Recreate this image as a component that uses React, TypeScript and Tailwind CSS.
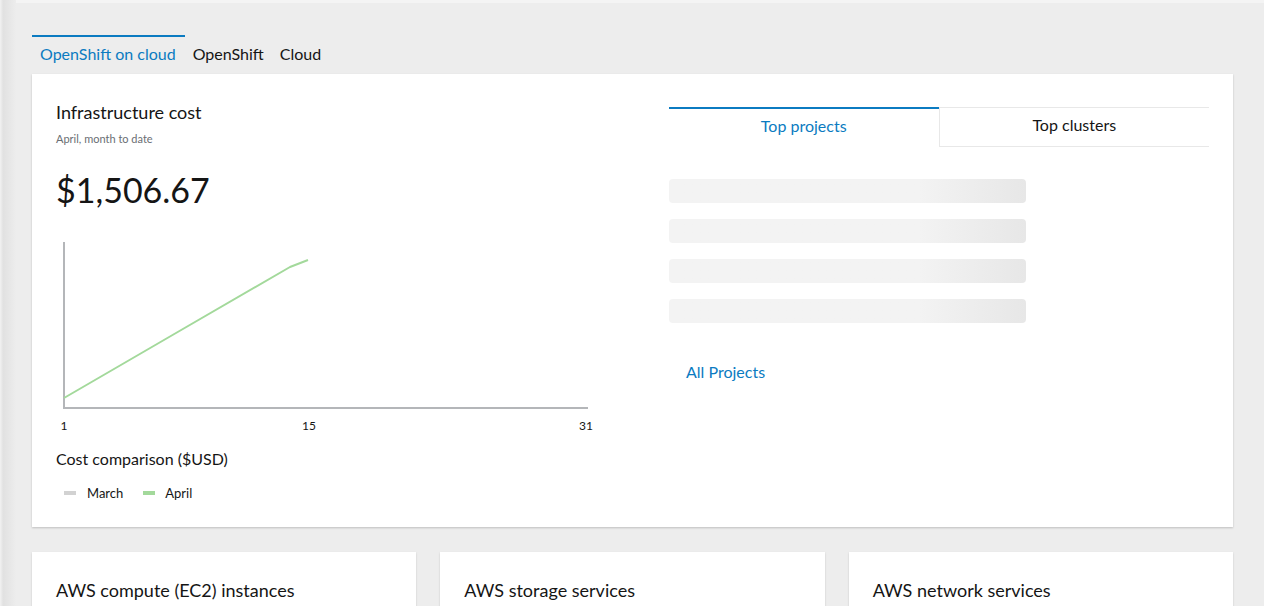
const font = { fontFamily: "Lato, 'Liberation Sans', sans-serif" }

function SkeletonBar() {
  return <div className="h-6 w-[357px] rounded-[4px] bg-gradient-to-r from-[#f3f3f3] from-70% to-[#e7e7e7]" />
}

function CostChart() {
  return (
    <svg width="560" height="198" viewBox="0 0 560 198" className="block">
      <line x1="8" y1="6" x2="8" y2="172" stroke="#b4b6b9" strokeWidth="2" />
      <line x1="7" y1="172" x2="532" y2="172" stroke="#b4b6b9" strokeWidth="2" />
      <polyline
        points="8,162 120,97 234,31 252,24"
        fill="none"
        stroke="#a3d99b"
        strokeWidth="2"
        strokeLinejoin="round"
      />
      <text x="8" y="194" fontSize="12" fill="#151515" textAnchor="middle" fontFamily="Lato, sans-serif">1</text>
      <text x="253" y="194" fontSize="12" fill="#151515" textAnchor="middle" fontFamily="Lato, sans-serif">15</text>
      <text x="530" y="194" fontSize="12" fill="#151515" textAnchor="middle" fontFamily="Lato, sans-serif">31</text>
    </svg>
  )
}

function ServiceCard({ title }: { title: string }) {
  return (
    <div className="flex-1 bg-white shadow-[0_1px_2px_rgba(0,0,0,0.15)] px-6 pt-[27px] pb-6">
      <h3 className="text-[18px] text-[#151515] leading-[22px]">{title}</h3>
    </div>
  )
}

export default function App() {
  const tabs = ["OpenShift on cloud", "OpenShift", "Cloud"]

  return (
    <div className="min-h-screen bg-[#ededed] flex" style={font}>
      <div className="w-[16px] shrink-0 bg-gradient-to-r from-[#f2f2f2] via-[#e1e1e1] via-20% to-[#ededed]" />
      <div className="flex-1 flex flex-col">
        <div className="h-[3px] bg-[#f4f4f4]" />
        <main className="pl-[16px] pr-[31px] pt-[32px]">
          <div className="flex">
            {tabs.map((t, i) => (
              <button
                key={t}
                className={`h-[39px] pb-1 text-[16px] border-t-2 ${
                  i === 0 ? "border-[#0b7bc1] text-[#0b7bc1] pl-2 pr-[9px]" : "border-transparent text-[#151515] px-2"
                }`}
              >
                {t}
              </button>
            ))}
          </div>

          <section className="bg-white shadow-[0_1px_2px_rgba(0,0,0,0.2)] flex justify-between pl-6 pr-6 pt-[27px] pb-[24px]">
            <div className="w-[589px]">
              <h2 className="text-[18px] leading-[22px] text-[#151515]">Infrastructure cost</h2>
              <p className="mt-[8px] text-[11px] text-[#6a6e73]">April, month to date</p>
              <p className="mt-[20px] text-[34px] leading-[44px] text-[#151515]">$1,506.67</p>
              <div className="mt-[24px]">
                <CostChart />
              </div>
              <p className="mt-[13px] text-[16px] text-[#151515]">Cost comparison ($USD)</p>
              <div className="mt-[13px] flex items-center pl-2 text-[13px] text-[#151515]">
                <span className="w-3 h-[4px] bg-[#d2d2d2] mr-[11px]" />
                <span>March</span>
                <span className="w-3 h-[4px] bg-[#a3d99b] ml-[20px] mr-[10px]" />
                <span>April</span>
              </div>
            </div>

            <div className="w-[540px] pt-[6px]">
              <div className="flex">
                <button className="flex-1 h-[40px] pb-1 border-t-2 border-[#0b7bc1] text-[16px] text-[#0b7bc1]">
                  Top projects
                </button>
                <button className="flex-1 h-[40px] pb-1 border border-r-0 border-[#e8e8e8] text-[16px] text-[#151515]">
                  Top clusters
                </button>
              </div>
              <div className="mt-[32px] flex flex-col gap-4">
                <SkeletonBar />
                <SkeletonBar />
                <SkeletonBar />
                <SkeletonBar />
              </div>
              <a className="block mt-[37px] ml-[17px] text-[16px] text-[#0b7bc1]">All Projects</a>
            </div>
          </section>

          <div className="mt-[25px] flex gap-6">
            <ServiceCard title="AWS compute (EC2) instances" />
            <ServiceCard title="AWS storage services" />
            <ServiceCard title="AWS network services" />
          </div>
        </main>
      </div>
    </div>
  )
}
